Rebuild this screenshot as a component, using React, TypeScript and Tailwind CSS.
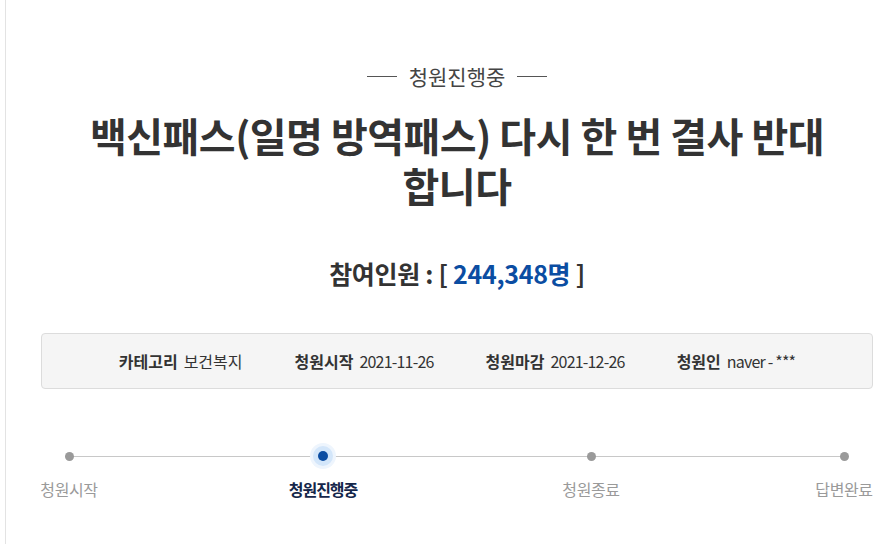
import React from "react";

const font = { fontFamily: '"Noto Sans CJK KR", "Noto Sans", sans-serif' };

function Step({ label, active, w, ml }: { label: string; active?: boolean; w: string; ml: string }) {
  return (
    <div className={`flex flex-col items-center ${w} ${ml}`}>
      <div className="relative flex h-[26px] w-[26px] items-center justify-center">
        {active ? (
          <div className="flex h-[26px] w-[26px] items-center justify-center rounded-full bg-[#eef5fd]">
            <div className="flex h-[20px] w-[20px] items-center justify-center rounded-full bg-[#d3e6fa]">
              <div className="h-[10px] w-[10px] rounded-full bg-[#0b4da2]" />
            </div>
          </div>
        ) : (
          <div className="h-[9px] w-[9px] rounded-full bg-[#9a9a9a]" />
        )}
      </div>
      <div
        className={`mt-[8px] whitespace-nowrap text-[16px] leading-[24px] ${
          active ? "font-bold tracking-[-1px] text-[#15264a]" : "tracking-[-0.4px] text-[#9a9a9a]"
        }`}
      >
        {label}
      </div>
    </div>
  );
}

export default function App() {
  return (
    <div className="h-[544px] w-[890px] overflow-hidden bg-white" style={font}>
      <div className="ml-[5px] h-[600px] w-[903px] border-l border-[#e3e3e3] px-[35px] text-[#333]">
        <div className="flex items-center justify-center pt-[61px]">
          <div className="h-px w-[30px] bg-[#555]" />
          <div className="mx-[12px] text-[21px] leading-[30px] text-[#444]">청원진행중</div>
          <div className="h-px w-[30px] bg-[#555]" />
        </div>
        <h1 className="mx-auto mt-[19px] w-[760px] text-center text-[40px] font-bold leading-[50px] tracking-[-0.5px] text-[#333]">
          백신패스(일명 방역패스) 다시 한 번 결사 반대 합니다
        </h1>
        <div className="mt-[46px] text-center text-[25px] font-bold leading-[34px] tracking-[-0.3px] text-[#333]">
          참여인원 : [ <span className="text-[#0b4da2]">244,348명</span> ]
        </div>
        <div className="mt-[43px] flex h-[56px] items-center justify-center gap-[52px] rounded-[4px] border border-[#dcdcdc] bg-[#f5f5f5] text-[16px] text-[#333]">
          <div className="flex items-center gap-[6px]">
            <span className="font-bold">카테고리</span>
            <span>보건복지</span>
          </div>
          <div className="flex items-center gap-[6px]">
            <span className="font-bold">청원시작</span>
            <span className="tracking-[-0.8px]">2021-11-26</span>
          </div>
          <div className="flex items-center gap-[6px]">
            <span className="font-bold">청원마감</span>
            <span className="tracking-[-0.8px]">2021-12-26</span>
          </div>
          <div className="flex items-center gap-[6px]">
            <span className="font-bold">청원인</span>
            <span className="tracking-[-0.8px]">naver - ***</span>
          </div>
        </div>
        <div className="relative mt-[54px] w-[831px]">
          <div className="absolute left-[28px] top-[13px] h-px w-[775px] bg-[#c8c8c8]" />
          <div className="relative flex">
            <Step label="청원시작" w="w-[56px]" ml="ml-0" />
            <Step label="청원진행중" active w="w-[68px]" ml="ml-[192px]" />
            <Step label="청원종료" w="w-[56px]" ml="ml-[206px]" />
            <Step label="답변완료" w="w-[56px]" ml="ml-[197px]" />
          </div>
        </div>
      </div>
    </div>
  );
}
